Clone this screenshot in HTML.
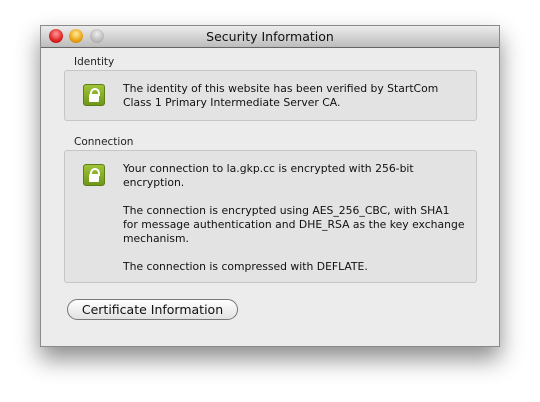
<!DOCTYPE html><html><head><style>
body{margin:0;width:540px;height:402px;background:#fff;position:relative;font-family:"DejaVu Sans","Liberation Sans",sans-serif;overflow:hidden}
.win{position:absolute;left:40px;top:25px;width:460px;height:322px;background:#ececec;box-shadow:0 12px 22px rgba(0,0,0,.45);border:1px solid #8a8a8a;box-sizing:border-box}
.tb{height:21px;background:linear-gradient(#ececec,#bcbcbc);border-bottom:1px solid #666;text-align:center;font-size:12.5px;line-height:21px;color:#111}
.dot{position:absolute;top:3px;width:14px;height:14px;border-radius:50%}
.lbl{position:absolute;left:33px;font-size:10.5px;color:#222}
.box{position:absolute;left:23px;width:413px;background:#e3e3e3;border:1px solid #c6c6c6;border-radius:3px;box-sizing:border-box}
.ic{position:absolute;left:18px;width:22px;height:22px;border-radius:3px;background:linear-gradient(#9fc43a,#6f961a);border:1px solid #5d7f15;box-sizing:border-box}
.ic:before{content:"";position:absolute;left:6px;top:3px;width:6px;height:6px;border:2px solid #fff;border-bottom:none;border-radius:5px 5px 0 0}
.ic:after{content:"";position:absolute;left:5px;top:9px;width:10px;height:8px;background:#fff;border-radius:1px}
.t{position:absolute;left:58px;font-size:10.8px;line-height:14px;color:#111;white-space:nowrap}
.btn{position:absolute;left:26px;top:273px;width:171px;height:21px;border:1px solid #777;border-radius:11px;background:linear-gradient(#fff,#f0f0f0 50%,#e2e2e2);box-sizing:border-box;font-size:12.5px;line-height:19px;text-align:center;color:#111}
</style></head><body>
<div class="win">
<div class="tb">Security Information</div>
<div class="dot" style="left:8px;background:radial-gradient(circle at 50% 35%,#f99,#d22 60%,#a00)"></div>
<div class="dot" style="left:28px;background:radial-gradient(circle at 50% 35%,#fe9,#e9a010 60%,#b70)"></div>
<div class="dot" style="left:49px;background:radial-gradient(circle at 50% 35%,#eee,#bbb 60%,#999)"></div>
<div class="lbl" style="top:30px">Identity</div>
<div class="box" style="top:44px;height:51px">
<div class="ic" style="top:13px"></div>
<div class="t" style="top:11px">The identity of this website has been verified by StartCom<br>Class 1 Primary Intermediate Server CA.</div>
</div>
<div class="lbl" style="top:110px">Connection</div>
<div class="box" style="top:124px;height:133px">
<div class="ic" style="top:13px"></div>
<div class="t" style="top:11px">Your connection to la.gkp.cc is encrypted with 256-bit<br>encryption.<br><br>The connection is encrypted using AES_256_CBC, with SHA1<br>for message authentication and DHE_RSA as the key exchange<br>mechanism.<br><br>The connection is compressed with DEFLATE.</div>
</div>
<div class="btn">Certificate Information</div>
</div>
</body></html>
